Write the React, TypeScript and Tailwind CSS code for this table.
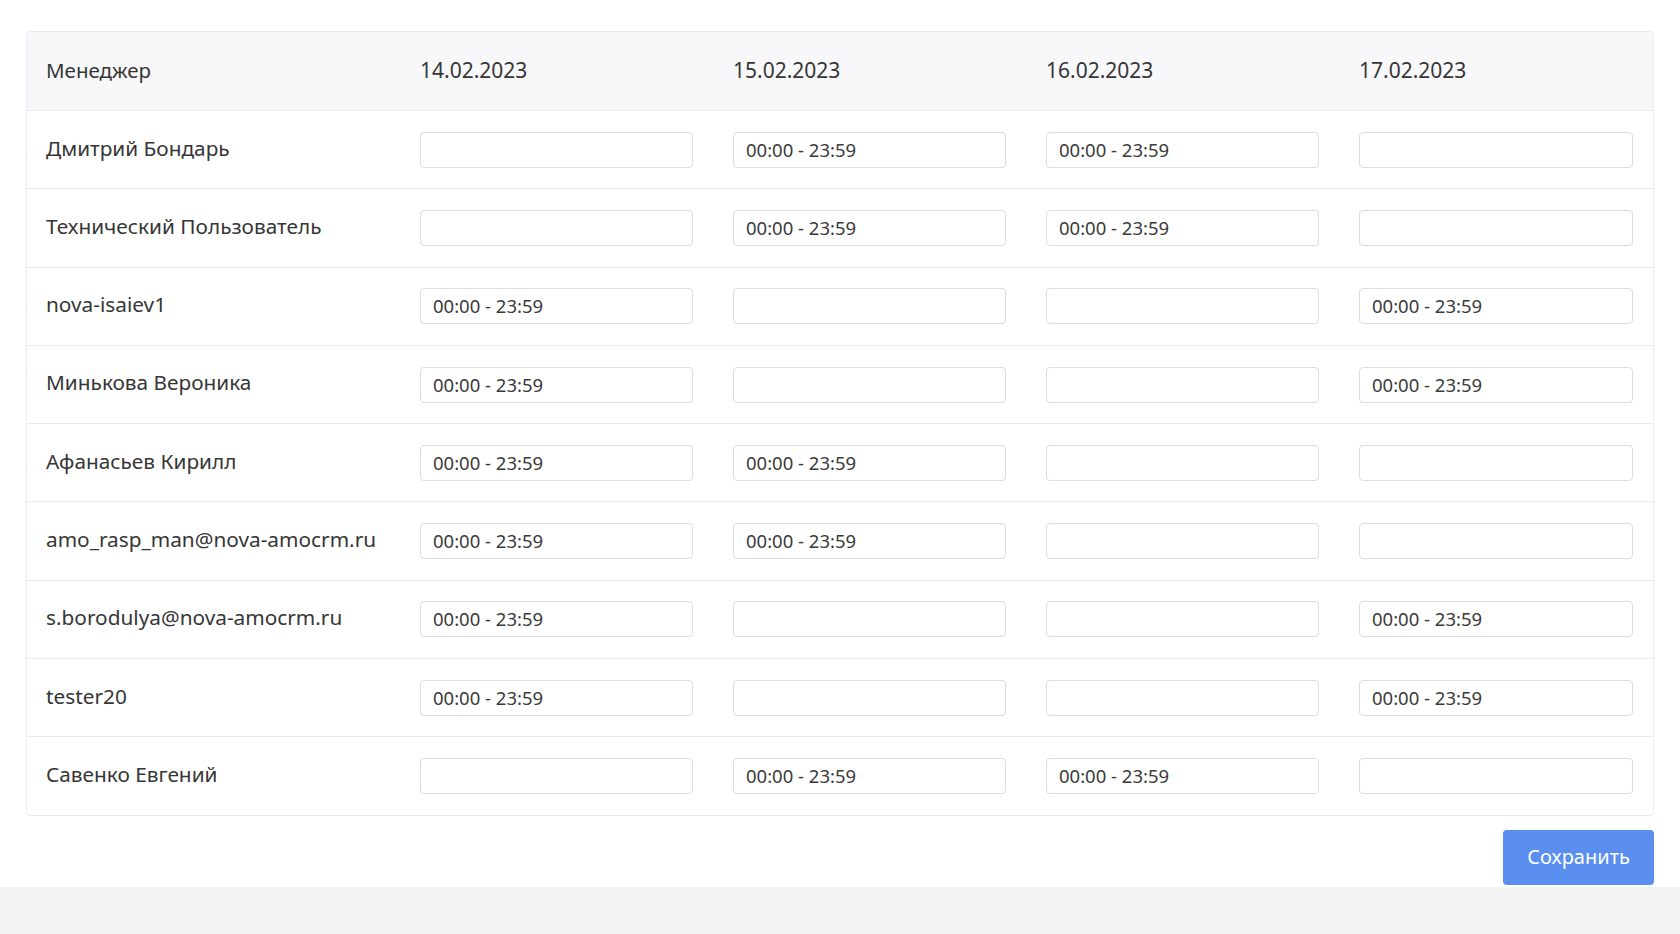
const dates = ["14.02.2023", "15.02.2023", "16.02.2023", "17.02.2023"];

const rows: { name: string; slots: boolean[] }[] = [
  { name: "Дмитрий Бондарь", slots: [false, true, true, false] },
  { name: "Технический Пользователь", slots: [false, true, true, false] },
  { name: "nova-isaiev1", slots: [true, false, false, true] },
  { name: "Минькова Вероника", slots: [true, false, false, true] },
  { name: "Афанасьев Кирилл", slots: [true, true, false, false] },
  { name: "amo_rasp_man@nova-amocrm.ru", slots: [true, true, false, false] },
  { name: "s.borodulya@nova-amocrm.ru", slots: [true, false, false, true] },
  { name: "tester20", slots: [true, false, false, true] },
  { name: "Савенко Евгений", slots: [false, true, true, false] },
];

const font = { fontFamily: '"Noto Sans", "Open Sans", sans-serif' };

function TimeInput({ value }: { value: string }) {
  return (
    <input
      type="text"
      defaultValue={value}
      className="h-[36px] w-full rounded-[4px] border border-[#dcdce1] bg-white px-[12px] pb-[1px] text-[18.5px] text-[#3a3a3a] outline-none"
    />
  );
}

export default function App() {
  return (
    <div className="min-h-screen bg-[#f3f3f4]" style={font}>
      <div className="bg-white pb-[2px] pl-[26px] pr-[26px] pt-[31px]">
        <div className="rounded-[4px] border border-[#ebebef] text-[#363636]">
          <div className="grid h-[78px] grid-cols-[373px_repeat(3,313px)_1fr] items-center rounded-t-[4px] bg-[#f8f8fa] text-[20.5px]">
            <div className="pb-[2px] pl-[19px]">Менеджер</div>
            {dates.map((d) => (
              <div key={d} className="px-[20px] text-[21px]">
                {d}
              </div>
            ))}
          </div>
          {rows.map((row) => (
            <div
              key={row.name}
              className="grid h-[78.3px] grid-cols-[373px_repeat(3,313px)_1fr] items-center border-t border-[#ebebef] text-[20.8px]"
            >
              <div className="pb-[3px] pl-[19px]">{row.name}</div>
              {row.slots.map((on, i) => (
                <div key={i} className="px-[20px]">
                  <TimeInput value={on ? "00:00 - 23:59" : ""} />
                </div>
              ))}
            </div>
          ))}
        </div>
        <div className="mt-[14px] flex justify-end">
          <button
            type="button"
            className="h-[55px] w-[151px] rounded-[4px] bg-[#5a8fef] text-[20px] text-white"
          >
            Сохранить
          </button>
        </div>
      </div>
    </div>
  );
}
